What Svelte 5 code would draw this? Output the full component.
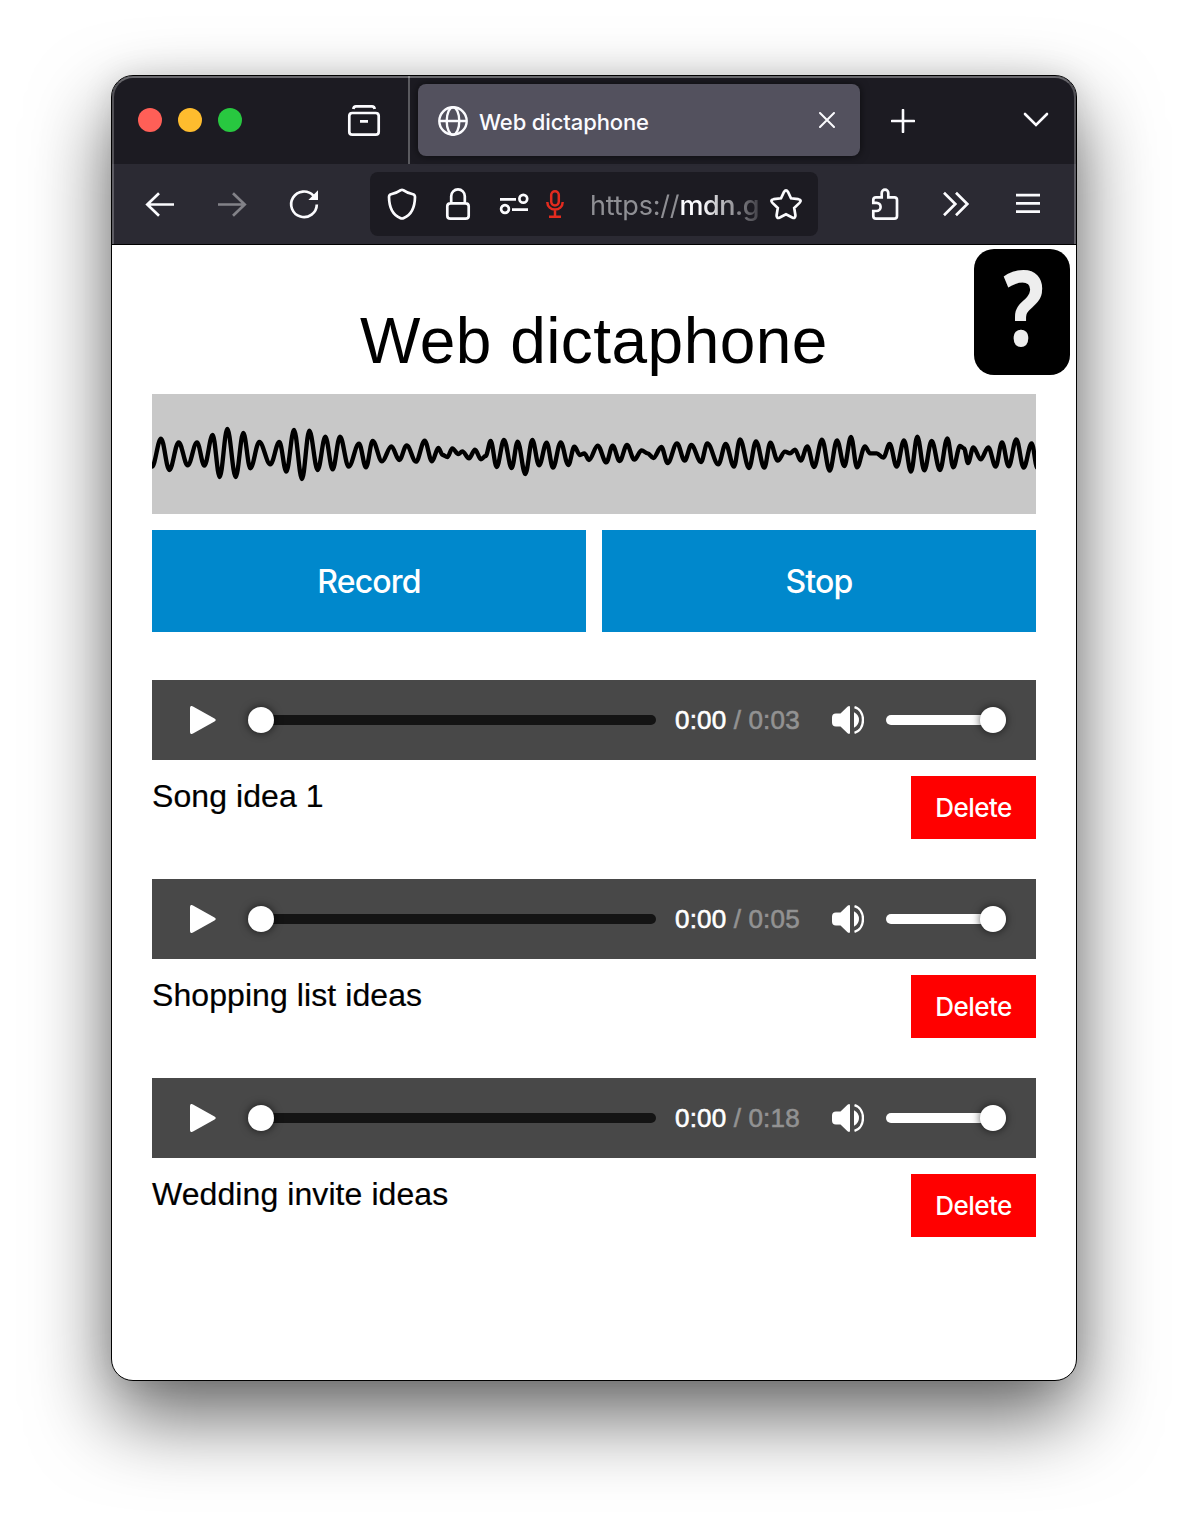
<script>
  const clips = [
    { name: 'Song idea 1', duration: '0:03' },
    { name: 'Shopping list ideas', duration: '0:05' },
    { name: 'Wedding invite ideas', duration: '0:18' }
  ];

  // Alternating crests and troughs of the recorded signal, three units per pixel.
  const samples = [
    [0,218],[27,134],[52,228],[80,145],[107,214],[135,145],[157,215],[182,123],[203,249],[226,105],
    [251,249],[274,117],[295,223],[322,144],[355,211],[382,144],[403,233],[426,108],[450,255],[472,110],
    [497,228],[520,128],[542,226],[564,128],[590,218],[621,149],[642,220],[662,141],[690,202],[718,157],
    [742,198],[764,154],[792,203],[818,140],[840,202],[859,162],[872,183],[886,189],[901,163],[919,180],
    [931,172],[951,193],[969,167],[987,196],[1001,186],[1016,141],[1034,219],[1056,138],[1079,222],
    [1097,143],[1120,240],[1141,138],[1161,214],[1184,146],[1203,221],[1226,145],[1249,213],[1267,158],
    [1284,183],[1297,178],[1311,198],[1337,155],[1363,205],[1382,155],[1403,201],[1425,153],[1447,197],
    [1469,169],[1487,178],[1504,192],[1528,159],[1547,207],[1575,148],[1598,200],[1618,153],[1647,204],
    [1666,148],[1699,211],[1721,150],[1746,218],[1764,136],[1791,222],[1812,142],[1837,221],[1855,146],
    [1877,200],[1899,173],[1914,178],[1929,167],[1946,200],[1966,157],[1986,219],[2010,137],[2033,230],
    [2055,139],[2077,216],[2097,129],[2115,220],[2139,157],[2154,178],[2174,178],[2194,191],[2213,150],
    [2234,218],[2256,139],[2277,233],[2296,128],[2317,229],[2339,141],[2364,228],[2386,133],[2404,220],
    [2424,156],[2436,163],[2448,207],[2464,160],[2486,196],[2509,160],[2531,218],[2550,145],[2570,217],
    [2593,136],[2615,221],[2639,148],[2656,222]
  ];

  const wave = samples
    .map(([x, y], i) => {
      if (i === 0) return `M${x} ${y}`;
      const [px, py] = samples[i - 1];
      const d = (x - px) * 0.36;
      return `C${px + d} ${py} ${x - d} ${y} ${x} ${y}`;
    })
    .join('');
</script>

{#snippet icon(path)}
  <svg class="icon" viewBox="0 0 40 40"><path d={path} /></svg>
{/snippet}

<div class="desktop">
  <div class="window">
    <div class="chrome">
      <div class="tabs">
        <div class="lights"><i class="red"></i><i class="yellow"></i><i class="green"></i></div>
        <div class="archive">
          {@render icon('M9.3 9Q9.6 6.3 12 6.3H28Q30.4 6.3 30.7 9M8.3 13H31.7Q34.7 13 34.7 16V31.7Q34.7 34.7 31.7 34.7H8.3Q5.3 34.7 5.3 31.7V16Q5.3 13 8.3 13ZM16 21.3H24')}
        </div>
        <div class="divider"></div>
        <div class="tab">
          <svg class="globe" viewBox="0 0 30 30">
            <circle cx="15" cy="15" r="13.7" /><ellipse cx="15" cy="15" rx="6.3" ry="13.7" /><path d="M1.5 15H28.5" />
          </svg>
          <span class="title">Web dictaphone</span>
          <svg class="close" viewBox="0 0 16 16"><path d="M1 1L15 15M15 1L1 15" /></svg>
        </div>
        <svg class="plus" viewBox="0 0 24 24"><path d="M12 1V23M1 12H23" /></svg>
        <svg class="chevron" viewBox="0 0 26 16"><path d="M2 2L13 13L24 2" /></svg>
      </div>

      <div class="toolbar">
        <div class="nav">
          {@render icon('M34 20.5H7.5M19 9.3L7.3 20.5L19 31.7')}
          <div class="dim">{@render icon('M6 20.5H32.5M21 9.3L32.7 20.5L21 31.7')}</div>
          <svg class="icon" viewBox="0 0 40 40">
            <path d="M32.8 20.5A12.8 12.8 0 1 1 29.4 11.6" /><path class="solid" d="M34 6.2V16H24.4Z" />
          </svg>
        </div>
        <div class="address">
          {@render icon('M18.8 6.2Q20 5.4 21.2 6.2Q25 9 31 10.2Q33 10.8 33 13C32.8 24 29 31 21.8 34Q20 35 18.2 34C11 31 7.2 24 7 13Q7 10.8 9 10.2Q15 9 18.8 6.2Z')}
          {@render icon('M12.5 19.3H27.5Q30.7 19.3 30.7 22.3V31.7Q30.7 34.7 27.5 34.7H12.5Q9.3 34.7 9.3 31.7V22.3Q9.3 19.3 12.5 19.3ZM13.2 19V12.2A6.8 6.8 0 0 1 26.8 12.2V19')}
          {@render icon('M6 15.3H22M33.2 14.7A3.9 3.9 0 1 1 25.4 14.7A3.9 3.9 0 1 1 33.2 14.7M14.9 25A3.9 3.9 0 1 1 7.1 25A3.9 3.9 0 1 1 14.9 25M18 25.7H34')}
          <div class="mic">
            {@render icon('M16.2 11A3.8 3.8 0 0 1 23.8 11V17.6A3.8 3.8 0 0 1 16.2 17.6ZM12.3 18C12.3 28 27.7 28 27.7 18M20 25.7V32.5M14 32.8H26')}
          </div>
          <div class="url"><span>https://</span>mdn.g</div>
          {@render icon('M18 8Q20 4.6 22 8L25 14.3L32.3 15.2Q36.3 16 33.5 18.9L28.2 24L29.4 31.2Q29.6 35 26.2 33.5L20 30.2L13.8 33.5Q10.4 35 10.6 31.2L11.8 24L6.5 18.9Q3.7 16 7.7 15.2L15 14.3Z')}
        </div>
        <div class="actions">
          {@render icon('M8.3 18.8V16Q8.3 13.3 11 13.3H16.7V9A3.3 3.3 0 0 1 23.3 9V13.3H29.3Q32 13.3 32 16V32Q32 34.7 29.3 34.7H11Q8.3 34.7 8.3 32V27H11.5A4.1 4.1 0 0 0 11.5 18.8Z')}
          {@render icon('M7 8.7L18.3 20L7 31.3M19 8.7L30.3 20L19 31.3')}
          {@render icon('M7 11.2H31M7 19.4H31M7 27.6H31')}
        </div>
      </div>
    </div>

    <main>
      <div class="help"><span>?</span></div>
      <h1>Web dictaphone</h1>
      <svg class="visualizer" viewBox="0 0 2652 360"><path d={wave} /></svg>
      <div class="controls">
        <button>Record</button>
        <button>Stop</button>
      </div>

      {#each clips as clip}
        <article>
          <div class="player">
            <svg class="play" viewBox="0 0 26 28"><path d="M0 2Q0-1 3 .4L24.5 12.6Q27 14 24.5 15.4L3 27.6Q0 29 0 26Z" /></svg>
            <div class="scrub"><b></b></div>
            <div class="time">0:00 <span>/ {clip.duration}</span></div>
            <svg class="speaker" viewBox="0 0 32 28">
              <path d="M4 7.5H8.5L15.5.8Q18-1 18 1.5V26.5Q18 29 15.5 27.2L8.5 20.5H4Q0 20.5 0 16.5V11.5Q0 7.5 4 7.5ZM22 6.3Q27 9 27 14T22 21.7Z" />
              <path class="ring" d="M22.5 1.2C33.8 4.5 33.8 23.5 22.5 26.8" />
            </svg>
            <div class="volume"><b></b></div>
          </div>
          <div class="caption">
            <p>{clip.name}</p>
            <button>Delete</button>
          </div>
        </article>
      {/each}
    </main>
  </div>
</div>

<style>
  :global(body) { background: #fff; }
  * { box-sizing: border-box; }
  .desktop { width: 1188px; height: 1528px; padding: 75px 111px; overflow: hidden; }
  .window {
    width: 966px; height: 1306px; border: 1px solid #000; border-radius: 22px;
    overflow: hidden; background: #fff; box-shadow: 0 36px 80px rgba(0, 0, 0, .6), 0 0 30px rgba(0, 0, 0, .1);
  }
  svg { display: block; flex: none; fill: none; stroke: #fbfbfe; stroke-width: 2.7; }
  .chrome {
    position: relative; height: 169px; border-bottom: 1px solid #000; background: #2b2a33;
  }
  .chrome::after {
    content: ''; position: absolute; inset: 0; border: 2px solid rgba(255, 255, 255, .24);
    border-top-color: rgba(255, 255, 255, .34); border-bottom: 0; border-radius: 21px 21px 0 0;
  }
  .icon { width: 40px; height: 40px; }
  .solid { fill: #fbfbfe; stroke: none; }

  .tabs { display: flex; align-items: center; height: 88px; background: #1c1b22; }
  .lights { display: flex; gap: 16px; margin-left: 26px; width: 206px; }
  .lights i { width: 24px; height: 24px; border-radius: 50%; }
  .red { background: #ff5f57; }
  .yellow { background: #febc2e; }
  .green { background: #28c840; }
  .divider { width: 2px; height: 88px; margin: 0 8px 0 24px; background: #5b5b60; }
  .tab {
    display: flex; align-items: center; width: 442px; height: 72px; padding: 0 25px 0 20px;
    border-radius: 8px; background: #53515e; box-shadow: 0 0 8px rgba(0, 0, 0, .6);
  }
  .globe { width: 30px; height: 30px; margin-top: 2px; stroke-width: 2.4; }
  .title { flex: 1; margin: 3px 0 0 11px; font: 500 22px/30px Inter, sans-serif; letter-spacing: -.12px; color: #fbfbfe; white-space: nowrap; }
  .close { width: 16px; height: 16px; stroke-width: 2; stroke-linecap: round; }
  .plus { width: 24px; height: 24px; margin: 2px 0 0 31px; stroke-width: 2.6; stroke-linecap: round; }
  .chevron { width: 26px; height: 16px; margin-left: 108px; stroke-width: 2.6; stroke-linecap: round; }

  .toolbar { display: flex; align-items: center; height: 80px; }
  .nav { display: flex; gap: 32px; margin-left: 28px; }
  .dim { opacity: .42; }
  .address {
    display: flex; align-items: center; gap: 16px; width: 448px; height: 64px; margin-left: 46px;
    padding: 0 12px; border-radius: 8px; background: #1c1b22;
  }
  .mic { margin-left: -15px; }
  .mic :global(svg) { stroke: #e22b1f; stroke-width: 2.5; }
  .url {
    width: 171px; margin: 3px -11px 0 -1px; white-space: nowrap;
    font: 500 27px/36px Inter, sans-serif; letter-spacing: -.45px; color: #fbfbfe;
    mask-image: linear-gradient(90deg, #000 112px, rgba(0, 0, 0, .2) 167px);
  }
  .url span { font-weight: 400; color: #8f8f94; letter-spacing: -.2px; }
  .actions { display: flex; margin-left: 47px; gap: 32px; }

  main { position: relative; padding: 57px 40px 0; font-family: "Liberation Sans", sans-serif; color: #000; }
  .help {
    position: absolute; top: 4px; right: 6px; width: 96px; height: 126px; border-radius: 20px;
    background: #000; color: #eee; font: 700 104px/114px "Open Sans", sans-serif; text-align: center;
  }
  .help span { display: inline-block; transform: translateX(2px) scaleX(.82); }
  h1 { margin: 0; height: 92px; font-size: 64px; line-height: 78px; font-weight: 400; letter-spacing: .46px; text-align: center; }
  .visualizer { width: 884px; height: 120px; background: #c8c8c8; stroke: #000; stroke-width: 13; stroke-linejoin: round; }
  .visualizer path { filter: blur(2.2px); }
  .controls { display: flex; gap: 16px; margin: 16px 0 48px; }
  button { border: 0; padding: 0; color: #fff; font-family: Inter, sans-serif; font-weight: 500; }
  .controls button { flex: 1; height: 102px; background: #0088cc; font-size: 32px; letter-spacing: -.8px; }
  article { margin-bottom: 40px; }
  .player { display: flex; align-items: center; height: 80px; padding-left: 38px; background: #484848; }
  .play { width: 26px; height: 28px; fill: #fff; stroke: none; }
  .scrub, .volume { display: flex; align-items: center; height: 10px; border-radius: 5px; }
  .scrub { width: 408px; margin-left: 32px; background: #141414; }
  .volume { width: 120px; margin-left: 22px; justify-content: flex-end; background: #fff; }
  b { width: 26px; height: 26px; border-radius: 50%; background: #fff; box-shadow: 0 0 8px rgba(0, 0, 0, .65); }
  .time { width: 157px; margin-left: 19px; font-size: 26px; letter-spacing: .17px; color: #fff; -webkit-text-stroke: .6px; white-space: nowrap; }
  .time span { color: #929292; }
  .speaker { width: 32px; height: 28px; fill: #fff; stroke: none; }
  .ring { fill: none; stroke: #fff; stroke-width: 2.4; }
  .caption { display: flex; justify-content: space-between; margin-top: 16px; height: 63px; }
  p { margin: 0; font-size: 32px; line-height: 40px; letter-spacing: .08px; -webkit-text-stroke: .2px; }
  .caption button { width: 125px; height: 63px; background: #f00; font-size: 26px; letter-spacing: -.5px; }
</style>
